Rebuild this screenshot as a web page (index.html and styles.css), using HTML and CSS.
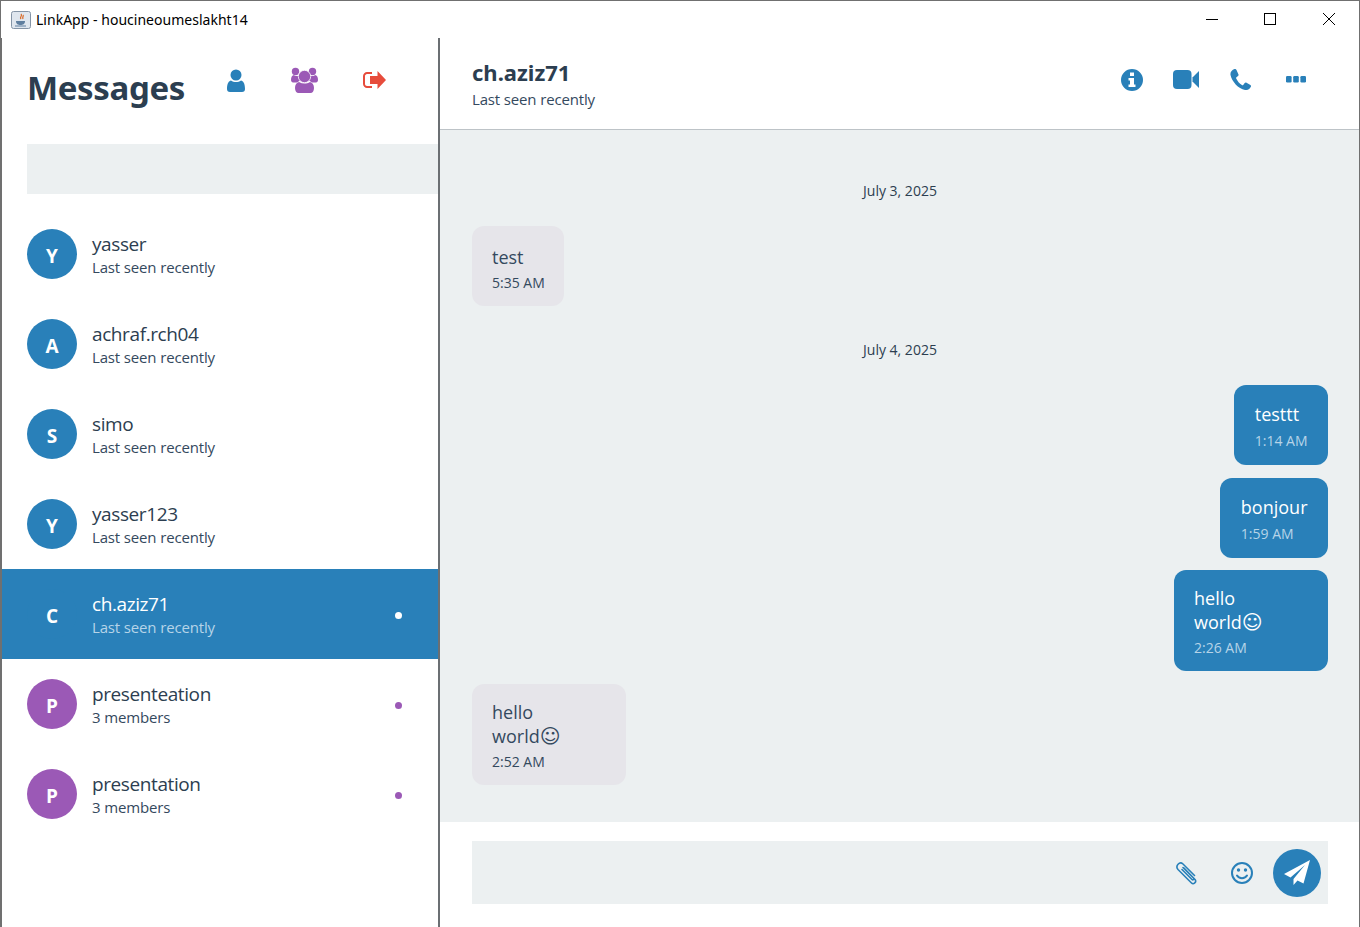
FILE: index.html
```html
<!DOCTYPE html>
<html lang="en">
<head>
<meta charset="utf-8">
<title>LinkApp - houcineoumeslakht14</title>
<link rel="stylesheet" href="styles.css">
</head>
<body>
<div class="window">
  <div class="titlebar">
    <svg class="appicon" width="20" height="18" viewBox="0 0 20 18"><rect x=".5" y=".5" width="19" height="17" rx="2" fill="#dfe6ee" stroke="#8494a6"/><path d="M10 3c2 2-2 3 0 5M12 4c1 1-1 2 0 4" fill="none" stroke="#d9651f" stroke-width="1.2"/><path d="M5 10h9c0 3-2 4-4.500 4S5 13 5 10z" fill="#5f7f9f"/><path d="M4 15h11" stroke="#5f7f9f"/></svg>
    <span class="wintitle">LinkApp - houcineoumeslakht14</span>
    <div class="winctrls">
      <span class="winbtn"><svg width="12" height="12" viewBox="0 0 12 12"><path d="M0 6.500h12" stroke="#000"/></svg></span>
      <span class="winbtn"><svg width="12" height="12" viewBox="0 0 12 12"><rect x=".5" y=".5" width="11" height="11" fill="none" stroke="#000"/></svg></span>
      <span class="winbtn"><svg width="12" height="12" viewBox="0 0 12 12"><path d="M0 0l12 12M12 0L0 12" stroke="#000"/></svg></span>
    </div>
  </div>
  <div class="app">
    <aside class="sidebar">
      <div class="side-head">
        <h1 class="side-title">Messages</h1>
        <svg class="ic ic-user" width="18" height="24" viewBox="0 0 18 24"><circle cx="9" cy="6" r="5.500" fill="#2980b9"/><path d="M0 20c0-6 2-8 4-8.500 3 2 7 2 10 0 2 .5 4 2.500 4 8.500 0 2-1 3-3 3H3c-2 0-3-1-3-3z" fill="#2980b9"/></svg>
        <svg class="ic ic-users" width="27" height="26" viewBox="0 0 27 26"><g fill="#9b59b6"><circle cx="4.500" cy="4.500" r="3.700"/><circle cx="21.500" cy="4.500" r="3.700"/><path d="M0 13c0-3 1-4.500 3-5 1 1 2 1.500 5 .5l1 5-3 2H2c-1 0-2-1-2-2.500zM27 13c0-3-1-4.500-3-5-1 1-2 1.500-5 .5l-1 5 3 2h4c1 0 2-1 2-2.500z"/><circle cx="13.500" cy="9.500" r="6.200" stroke="#fff" stroke-width=".8"/><path d="M4 21c0-3.500 1.500-5.500 4-6 3.500 2 7.500 2 11 0 2.500.5 4 2.500 4 6 0 3-1.500 5-3.500 5h-12C5.500 26 4 24 4 21z"/></g></svg>
        <svg class="ic ic-out" width="23" height="18" viewBox="0 0 23 18"><g fill="#e74c3c"><path d="M23 9l-8.500 9v-5H7V5h7.500V0z"/><path d="M9 1v2H4C3 3 2 4 2 5v8c0 1 1 2 2 2h5v2H4c-2 0-4-2-4-4V5c0-2 2-4 4-4z"/></g></svg>
      </div>
      <div class="search"></div>
      <div class="contacts">
        <div class="contact"><span class="avatar">Y</span><div class="cinfo"><div class="cname">yasser</div><div class="cstat">Last seen recently</div></div></div>
        <div class="contact"><span class="avatar">A</span><div class="cinfo"><div class="cname">achraf.rch04</div><div class="cstat">Last seen recently</div></div></div>
        <div class="contact"><span class="avatar">S</span><div class="cinfo"><div class="cname">simo</div><div class="cstat">Last seen recently</div></div></div>
        <div class="contact"><span class="avatar">Y</span><div class="cinfo"><div class="cname">yasser123</div><div class="cstat">Last seen recently</div></div></div>
        <div class="contact active"><span class="avatar">C</span><div class="cinfo"><div class="cname">ch.aziz71</div><div class="cstat">Last seen recently</div></div><span class="dot"></span></div>
        <div class="contact group"><span class="avatar">P</span><div class="cinfo"><div class="cname">presenteation</div><div class="cstat">3 members</div></div><span class="dot"></span></div>
        <div class="contact group"><span class="avatar">P</span><div class="cinfo"><div class="cname">presentation</div><div class="cstat">3 members</div></div><span class="dot"></span></div>
      </div>
    </aside>
    <main class="chat">
      <header class="chat-head">
        <div class="chat-id">
          <div class="chat-name">ch.aziz71</div>
          <div class="chat-stat">Last seen recently</div>
        </div>
        <div class="chat-actions">
          <svg width="22" height="22" viewBox="0 0 22 22"><path fill-rule="evenodd" fill="#2980b9" d="M11 0a11 11 0 1 1 0 22a11 11 0 0 1 0-22zM9 3.500v3.500h4V3.500zM7.500 9v2.500H9v4H7.500V18h7v-2.500H13V9z"/></svg>
          <svg class="a-video" width="26" height="19" viewBox="0 0 26 19"><g fill="#2980b9"><rect width="18.500" height="19" rx="4"/><path d="M19.500 7.500L26 1v17l-6.500-6.500z"/></g></svg>
          <svg class="a-phone" width="21" height="21" viewBox="0 0 21 21"><path fill="#2980b9" d="M4.500 0C2 1 0 3 .5 6c1 6 8 14 14.500 15 2.500.3 5-1 6-3.500.2-.8-.2-1.300-1-1.700l-3.500-2c-.7-.4-1.300-.3-1.800.3l-1.500 1.800c-.4.400-.8.400-1.300.1-2.500-1.500-4.500-4-5.700-6.500-.2-.5-.1-.9.300-1.200l1.500-1.300c.6-.5.700-1 .4-1.700L6.500 1C6 .2 5.300-.2 4.500 0z"/></svg>
          <svg class="a-more" width="20" height="7" viewBox="0 0 20 7"><g fill="#2980b9"><rect width="5.600" height="6.500" rx="1.200"/><rect x="7.200" width="5.600" height="6.500" rx="1.200"/><rect x="14.400" width="5.600" height="6.500" rx="1.200"/></g></svg>
        </div>
      </header>
      <section class="messages">
        <div class="date first">July 3, 2025</div>
        <div class="row"><div class="bubble in"><div class="mtext">test</div><div class="mtime">5:35 AM</div></div></div>
        <div class="date">July 4, 2025</div>
        <div class="row out"><div class="bubble sent"><div class="mtext">testtt</div><div class="mtime">1:14 AM</div></div></div>
        <div class="row out"><div class="bubble sent"><div class="mtext">bonjour</div><div class="mtime">1:59 AM</div></div></div>
        <div class="row out"><div class="bubble sent tall"><div class="mtext">hello<br>world<span class="emoji">☺</span></div><div class="mtime">2:26 AM</div></div></div>
        <div class="row"><div class="bubble in tall wide"><div class="mtext">hello<br>world<span class="emoji">☺</span></div><div class="mtime">2:52 AM</div></div></div>
      </section>
      <footer class="composer">
        <div class="field">
          <svg class="f-clip" width="24" height="24" viewBox="0 0 24 24"><path fill="none" stroke="#2980b9" stroke-width="1.600" stroke-linecap="round" d="M9 7l11 11.500c2 2.500-1.500 5.500-3.500 3.500L3 8.500C0 5 4.500 0 8 3l11.500 11.500M7 8.500l10 10c1 1 2.500-.5 1.500-1.500L8 6.500"/></svg>
          <svg class="f-smile" width="22" height="22" viewBox="0 0 22 22"><g fill="none" stroke="#2980b9" stroke-width="2"><circle cx="11" cy="11" r="10"/><path d="M6 13.500c2 3.500 8 3.500 10 0" stroke-linecap="round"/></g><circle cx="7.500" cy="8" r="1.700" fill="#2980b9"/><circle cx="14.500" cy="8" r="1.700" fill="#2980b9"/></svg>
          <span class="send"><svg width="26" height="25" viewBox="0 0 26 25"><path fill="#fff" d="M26 0L0 14l6.500 3.500L21 5 9.500 19v6l4-4.500 6 3z"/></svg></span>
        </div>
      </footer>
    </main>
  </div>
</div>
</body>
</html>
```
FILE: styles.css
```css
* { box-sizing: border-box; }
html, body { margin: 0; padding: 0; background: #fff; }
body { font-family: "Open Sans", "Noto Sans", sans-serif; color: #2c3e50; overflow: hidden; }
.window { width: 1360px; height: 927px; border: 1px solid #707070; border-bottom: 0; display: flex; flex-direction: column; background: #fff; }
.titlebar { height: 37px; flex: none; display: flex; align-items: center; padding-left: 10px; color: #000; }
.appicon { margin-right: 5px; }
.wintitle { font-family: "Noto Sans", sans-serif; font-size: 14px; letter-spacing: .02px; }
.winctrls { margin-left: auto; display: flex; padding-right: 1px; padding-bottom: 2px; }
.winbtn { width: 58.500px; height: 34px; display: flex; align-items: center; justify-content: center; }
.app { flex: 1; display: flex; min-height: 0; border-left: 1px solid #707070; }
.sidebar { width: 438px; flex: none; border-right: 2px solid #6b6f73; display: flex; flex-direction: column; }
.side-head { height: 106px; flex: none; display: flex; align-items: flex-start; padding-left: 25px; }
.side-title { margin: 23px 0 0; font-size: 33px; line-height: 54px; font-weight: 700; letter-spacing: -.35px; color: #2c3e50; width: 200px; font-family: "Noto Sans", sans-serif; }
.ic { flex: none; }
.ic-user { margin-top: 31px; }
.ic-users { margin-top: 29px; margin-left: 46px; }
.ic-out { margin-top: 33px; margin-left: 45px; }
.search { height: 50px; margin-left: 25px; flex: none; background: #ecf0f1; }
.contacts { margin-top: 15px; display: flex; flex-direction: column; }
.contact { height: 90px; display: flex; align-items: center; padding: 0 36px 0 25px; }
.avatar { width: 50px; height: 50px; border-radius: 50%; background: #2980b9; color: #fff; font-size: 19px; font-weight: 700; padding-top: 3px; display: flex; align-items: center; justify-content: center; flex: none; }
.cinfo { margin-left: 15px; flex: 1; padding-top: 3px; }
.cname { font-size: 19px; line-height: 24px; letter-spacing: -.4px; }
.cstat { font-size: 15px; line-height: 23px; letter-spacing: -.15px; color: #34495e; }
.dot { width: 7px; height: 7px; margin-top: 3px; border-radius: 50%; background: #fff; flex: none; }
.contact.active { background: #2980b9; color: #fff; }
.contact.active .cstat { color: #b6d4e8; }
.group .avatar { background: #9b59b6; }
.group .dot { background: #9b59b6; }
.chat { flex: 1; display: flex; flex-direction: column; min-width: 0; }
.chat-head { height: 92px; flex: none; border-bottom: 1px solid #bdc3c7; display: flex; align-items: center; padding: 0 32px; }
.chat-id { padding-top: 2px; }
.chat-name { font-family: "Noto Sans", sans-serif; font-size: 22px; line-height: 27px; margin-bottom: 1px; font-weight: 700; letter-spacing: 0; }
.chat-stat { font-size: 15px; line-height: 24px; letter-spacing: -.15px; color: #34495e; }
.chat-actions { margin-left: auto; display: flex; align-items: center; margin-top: -8px; }
.chat-actions svg { display: block; }
.a-video { margin-left: 30px; }
.a-phone { margin-left: 31px; }
.a-more { margin-left: 35px; margin-right: 21px; margin-top: -1px; }
.messages { flex: 1; min-height: 0; background: #ecf0f1; display: flex; flex-direction: column; padding: 0 31px 0 32px; }
.date { text-align: center; font-size: 14px; line-height: 20px; letter-spacing: 0; margin-top: 21.500px; margin-bottom: 25px; }
.date.first { margin-top: 51px; }
.row { display: flex; margin-bottom: 12.500px; }
.row.out { justify-content: flex-end; }
.bubble { border-radius: 12px; padding: 19px 19px 13px 20px; height: 80px; }
.bubble.in { background: #e6e5ea; color: #34495e; }
.bubble.sent { background: #2980b9; color: #fff; padding: 17px 20.500px 13px; }
.bubble.tall { height: 101px; width: 154px; padding: 16px 20px 13px; }
.mtext { font-size: 18px; line-height: 24px; letter-spacing: 0; }
.mtime { font-size: 14px; line-height: 20px; margin-top: 4px; letter-spacing: 0; }
.bubble.sent:not(.tall) .mtime { margin-top: 5px; }
.bubble.in .mtime { color: #34495e; }
.bubble.sent .mtime { color: #b6d4e8; }
.emoji { font-family: "DejaVu Sans", sans-serif; font-size: 20px; line-height: 20px; }
.composer { height: 105px; flex: none; background: #fff; padding: 19px 31px 23px 32px; }
.field { height: 63px; background: #ecf0f1; display: flex; align-items: center; justify-content: flex-end; padding-right: 7px; }
.f-clip { margin-right: 32px; }
.f-smile { margin-right: 20px; }
.send { width: 48px; height: 48px; border-radius: 50%; background: #2980b9; display: flex; align-items: center; justify-content: center; }
```
